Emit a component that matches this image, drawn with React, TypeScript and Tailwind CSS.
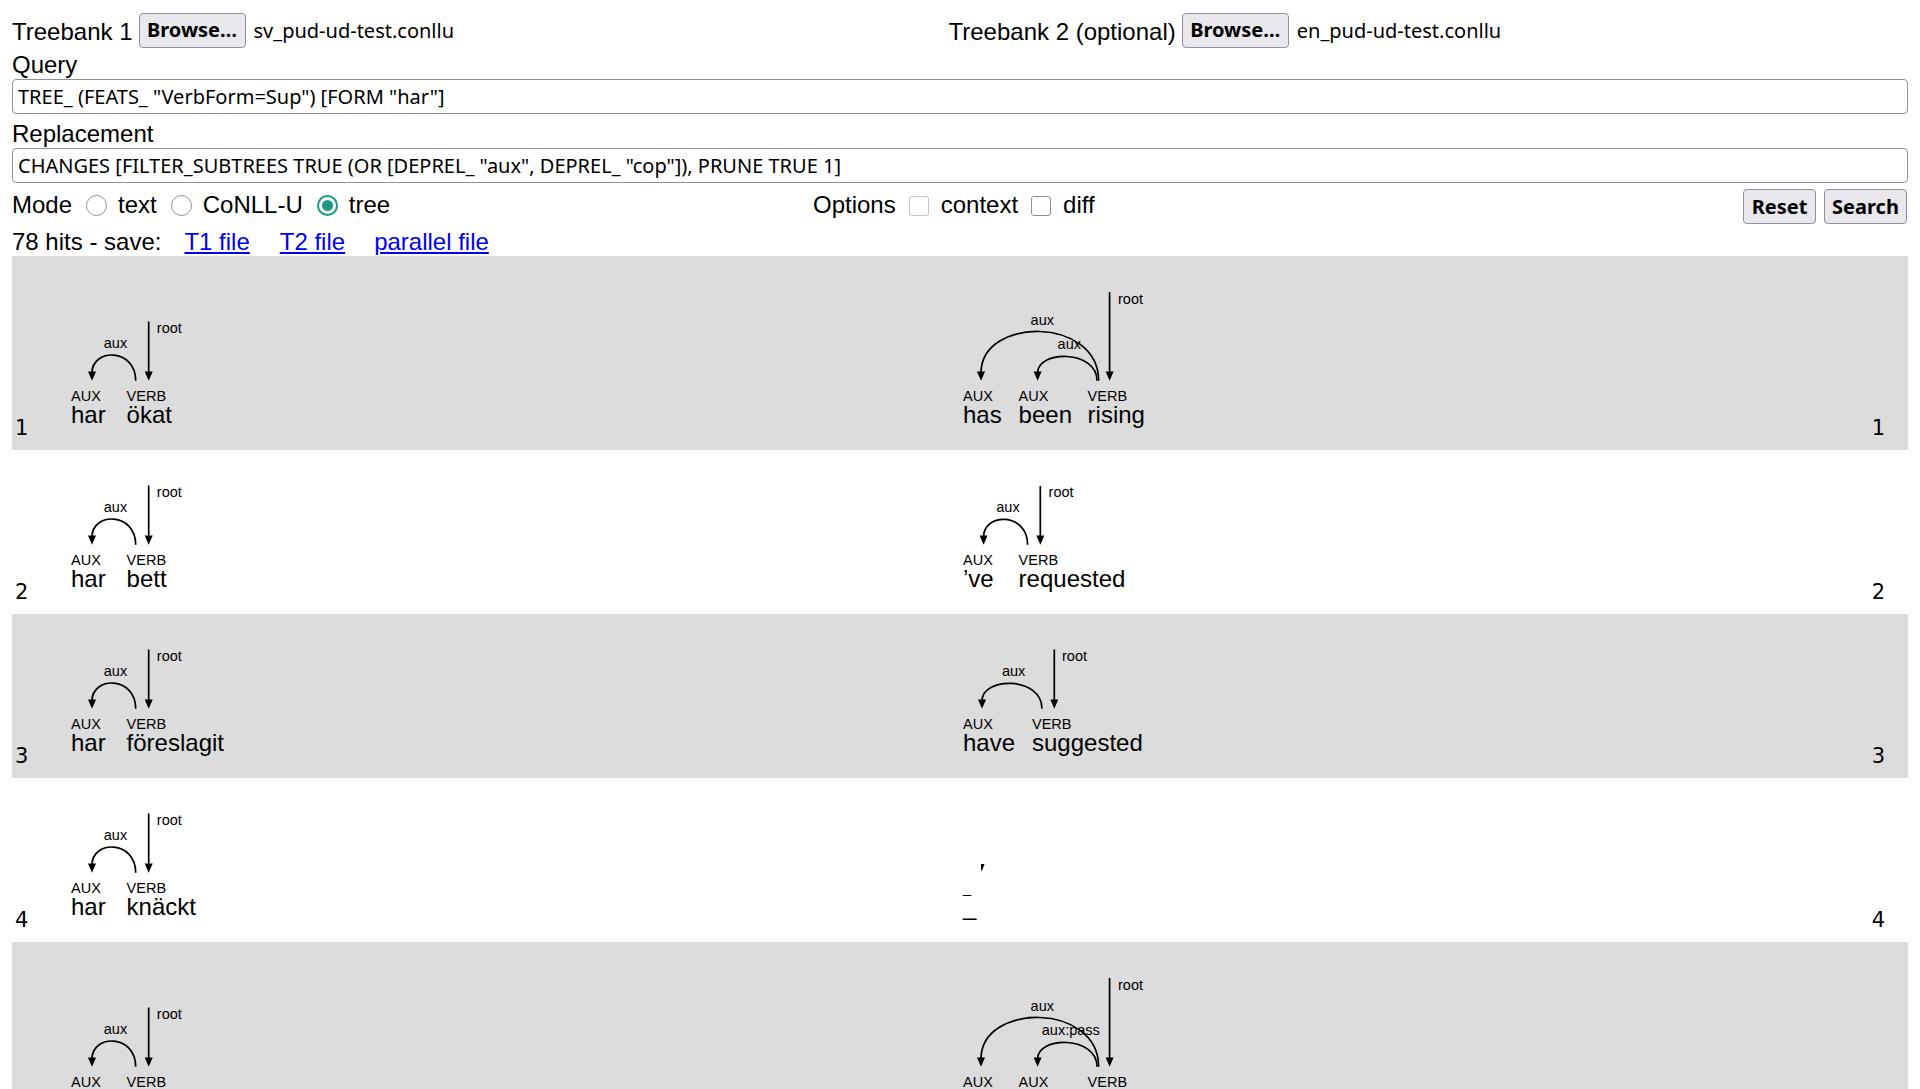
import React from "react";

type Tok = { pos: string; word: string; x: number };
type Arc = { from: number; to: number; top: number; label: string; lx: number; ly: number };
type Tree = {
  h: number;
  toks: Tok[];
  arcs: Arc[];
  root?: { x: number; top: number; lx: number; ly: number };
  stub?: number;
};

// two-token swedish trees all share the same geometry
const sv = (verb: string): Tree => ({
  h: 129,
  toks: [
    { pos: "AUX", word: "har", x: 0 },
    { pos: "VERB", word: verb, x: 55.6 },
  ],
  arcs: [{ from: 64.7, to: 21, top: -68, label: "aux", lx: 44.5, ly: -75 }],
  root: { x: 77.7, top: -101.5, lx: 85.8, ly: -90.5 },
});

const threeTok = (w: string[], inner: string, ilx: number): Tree => ({
  h: 159,
  toks: [
    { pos: "AUX", word: w[0], x: 0 },
    { pos: "AUX", word: w[1], x: 55.6 },
    { pos: "VERB", word: w[2], x: 124.6 },
  ],
  arcs: [
    { from: 134, to: 74.6, top: -66.6, label: inner, lx: ilx, ly: -74.4 },
    { from: 135.6, to: 18, top: -91.6, label: "aux", lx: 79.3, ly: -98.3 },
  ],
  root: { x: 146.6, top: -131, lx: 155, ly: -119.3 },
});

const rows: { n: number; left: Tree; right: Tree }[] = [
  { n: 1, left: sv("ökat"), right: threeTok(["has", "been", "rising"], "aux", 106.3) },
  {
    n: 2,
    left: sv("bett"),
    right: {
      h: 129,
      toks: [
        { pos: "AUX", word: "’ve", x: 0 },
        { pos: "VERB", word: "requested", x: 55.6 },
      ],
      arcs: [{ from: 64.6, to: 20.6, top: -67.7, label: "aux", lx: 45, ly: -74.6 }],
      root: { x: 77.3, top: -101, lx: 85.6, ly: -90.5 },
    },
  },
  {
    n: 3,
    left: sv("föreslagit"),
    right: {
      h: 129,
      toks: [
        { pos: "AUX", word: "have", x: 0 },
        { pos: "VERB", word: "suggested", x: 69 },
      ],
      arcs: [{ from: 79, to: 19, top: -67.7, label: "aux", lx: 50.6, ly: -74.6 }],
      root: { x: 91.3, top: -101.5, lx: 99, ly: -90.5 },
    },
  },
  {
    n: 4,
    left: sv("knäckt"),
    right: { h: 129, toks: [{ pos: "_", word: "_", x: 0 }], arcs: [], stub: 18 },
  },
  { n: 5, left: sv("genomfört"), right: threeTok(["has", "been", "carried"], "aux:pass", 107.8) },
];

function TreeSvg({ t }: { t: Tree }) {
  const base = t.h - 27;
  return (
    <svg
      width={340}
      height={t.h}
      className="block overflow-visible"
      fontFamily="'Liberation Sans', Arial, sans-serif"
    >
      <g transform={`translate(0 ${base})`}>
        {t.toks.map((k) => (
          <g key={k.x}>
            <text x={k.x} y={-22} fontSize={14.5}>
              {k.pos}
            </text>
            <text x={k.x} y={0} fontSize={24}>
              {k.word}
            </text>
          </g>
        ))}
        {t.arcs.map((a) => {
          const c = (a.top + 11.65) / 0.75;
          return (
            <g key={a.to}>
              <text x={a.lx} y={a.ly} fontSize={14.5} textAnchor="middle">
                {a.label}
              </text>
              <path
                d={`M${a.from} -42.3 C${a.from} ${c} ${a.to} ${c} ${a.to} -50`}
                fill="none"
                stroke="black"
                strokeWidth={1.7}
              />
              <polygon points={`${a.to - 4},-51.5 ${a.to + 4},-51.5 ${a.to},-42.3`} />
            </g>
          );
        })}
        {t.root && (
          <g>
            <text x={t.root.lx} y={t.root.ly} fontSize={14.5}>
              root
            </text>
            <line x1={t.root.x} y1={t.root.top} x2={t.root.x} y2={-50} stroke="black" strokeWidth={1.7} />
            <polygon
              points={`${t.root.x - 4},-51.5 ${t.root.x + 4},-51.5 ${t.root.x},-42.3`}
            />
          </g>
        )}
        {t.stub !== undefined && (
          <polygon
            points={`${t.stub},-51 ${t.stub + 3.5},-51 ${t.stub + 1},-44.3 ${t.stub},-45`}
          />
        )}
      </g>
    </svg>
  );
}

function Radio({ checked }: { checked?: boolean }) {
  if (checked) {
    return (
      <span className="mb-[8px] ml-[14px] flex h-[21px] w-[21px] shrink-0 items-center justify-center rounded-full border-2 border-[#1c9a86] bg-white">
        <span className="h-[11px] w-[11px] rounded-full bg-[#1c9a86]" />
      </span>
    );
  }
  return (
    <span className="mb-[8px] ml-[14px] h-[21px] w-[21px] shrink-0 rounded-full border border-[#8f8f9d] bg-white" />
  );
}

function FilePick({ label, file }: { label: string; file: string }) {
  return (
    <div className="flex items-center">
      <span className="pt-[3px]">{label}</span>
      <button className="ml-[6px] flex h-[35px] w-[107px] items-center justify-center rounded-[4px] border border-[#8f8f9d] bg-[#e9e9ed] font-['Noto_Sans',sans-serif] text-[20px] leading-none font-bold">
        Browse…
      </button>
      <span className="ml-[8px] font-['Noto_Sans',sans-serif] text-[20px] leading-[27px]">{file}</span>
    </div>
  );
}

export default function App() {
  return (
    <div className="min-h-screen bg-white px-[12px] pt-[12px] font-['Liberation_Sans',Arial,sans-serif] text-[24px] leading-[28px] text-black">
      {/* Treebank pickers */}
      <div className="grid h-[36px] grid-cols-[936.5px_1fr] items-center">
        <FilePick label="Treebank 1" file="sv_pud-ud-test.conllu" />
        <FilePick label="Treebank 2 (optional)" file="en_pud-ud-test.conllu" />
      </div>

      {/* Query */}
      <div className="mt-[3px]">Query</div>
      <div className="flex h-[35px] items-center rounded-[4px] border border-[#8f8f9d] pl-[5px] font-['Noto_Sans',sans-serif] text-[20px] leading-[27px]">
        TREE_ (FEATS_ "VerbForm=Sup") [FORM "har"]
      </div>

      {/* Replacement */}
      <div className="mt-[6px]">Replacement</div>
      <div className="flex h-[35px] items-center rounded-[4px] border border-[#8f8f9d] pl-[5px] font-['Noto_Sans',sans-serif] text-[20px] leading-[27px]">
        CHANGES [FILTER_SUBTREES TRUE (OR [DEPREL_ "aux", DEPREL_ "cop"]), PRUNE TRUE 1]
      </div>

      {/* Mode / options / buttons */}
      <div className="mt-[5px] flex h-[36px] items-end">
        <div className="flex w-[801px] shrink-0 items-end">
          <span className="pb-[5px]">Mode</span>
          <Radio />
          <span className="ml-[11px] pb-[5px]">text</span>
          <Radio />
          <span className="ml-[11px] pb-[5px]">CoNLL-U</span>
          <Radio checked />
          <span className="ml-[11px] pb-[5px]">tree</span>
        </div>
        <div className="flex items-end">
          <span className="pb-[5px]">Options</span>
          <span className="mb-[8.5px] ml-[13px] h-[20px] w-[20px] rounded-[3px] border border-[#c4c4cc] bg-white" />
          <span className="ml-[12px] pb-[5px]">context</span>
          <span className="mb-[8.5px] ml-[13px] h-[20px] w-[20px] rounded-[3px] border border-[#8f8f9d] bg-white" />
          <span className="ml-[12px] pb-[5px]">diff</span>
        </div>
        <div className="mr-[1px] ml-auto flex gap-[8px]">
          <button className="flex h-[35px] w-[73px] items-center justify-center rounded-[4px] border border-[#8f8f9d] bg-[#e9e9ed] font-['Noto_Sans',sans-serif] text-[20px] leading-none font-bold">
            Reset
          </button>
          <button className="flex h-[35px] w-[83px] items-center justify-center rounded-[4px] border border-[#8f8f9d] bg-[#e9e9ed] font-['Noto_Sans',sans-serif] text-[20px] leading-none font-bold">
            Search
          </button>
        </div>
      </div>

      {/* Hits */}
      <div className="mt-[4px] flex h-[28px] leading-[28px]">
        <span>78 hits - save:</span>
        <a href="#" className="ml-[23px] text-[#0000ee] underline">
          T1 file
        </a>
        <a href="#" className="ml-[30px] text-[#0000ee] underline">
          T2 file
        </a>
        <a href="#" className="ml-[29px] text-[#0000ee] underline">
          parallel file
        </a>
      </div>

      {/* Results */}
      <div>
        {rows.map((r) => (
          <div
            key={r.n}
            className={
              r.n % 2 === 1
                ? "grid grid-cols-[58.7px_892px_1fr_auto] items-end bg-[#dcdcdc] pt-[35px]"
                : "grid grid-cols-[58.7px_892px_1fr_auto] items-end bg-white pt-[35px]"
            }
          >
            <div className="pb-[11.5px] pl-[3px] font-['DejaVu_Sans',sans-serif] text-[21px] leading-none">
              {r.n}
            </div>
            <TreeSvg t={r.left} />
            <TreeSvg t={r.right} />
            <div className="pr-[23px] pb-[11.5px] font-['DejaVu_Sans',sans-serif] text-[21px] leading-none">
              {r.n}
            </div>
          </div>
        ))}
      </div>
    </div>
  );
}
